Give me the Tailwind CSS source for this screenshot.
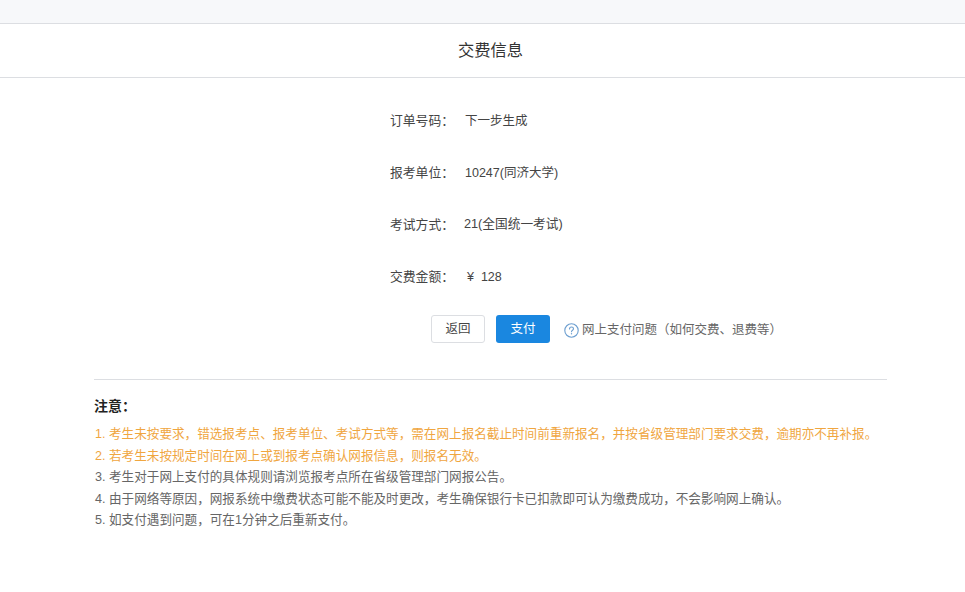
<!DOCTYPE html>
<html lang="zh-CN">
<head>
    <meta charset="UTF-8">
    <title>交费信息</title>
    <script src="https://cdn.jsdelivr.net/npm/@tailwindcss/browser@4"></script>
</head>
<body class="bg-white h-[592px] overflow-hidden font-['Liberation_Sans','Noto_Sans_CJK_SC',sans-serif] text-[12.5px] text-[#444]">
    <div class="h-6 bg-[#f7f8fa] border-b border-[#dcdee2]"></div>

    <header class="h-[54px] pl-[16px] flex items-center justify-center border-b border-[#dcdee2] text-[16.3px] text-[#333]">交费信息</header>

    <main>
        <!-- Order info -->
        <div class="pl-[390px] pt-[17px]">
            <div class="h-[52px] flex items-center">
                <span class="w-[75px] text-[12.8px]">订单号码：</span>
                <span>下一步生成</span>
            </div>
            <div class="h-[52px] flex items-center">
                <span class="w-[75px] text-[12.8px]">报考单位：</span>
                <span>10247(同济大学)</span>
            </div>
            <div class="h-[52px] flex items-center">
                <span class="w-[74px] text-[12.8px]">考试方式：</span>
                <span class="text-[12.7px]">21(全国统一考试)</span>
            </div>
            <div class="h-[52px] flex items-center">
                <span class="w-[77px] text-[12.8px]">交费金额：</span>
                <span>¥&nbsp; 128</span>
            </div>
        </div>

        <!-- Actions -->
        <div class="pl-[431px] mt-[12px] flex items-center">
            <button class="w-[54px] h-[28px] bg-white border border-[#dcdee2] rounded-[3px] text-[#444]">返回</button>
            <button class="w-[54px] h-[28px] ml-[11px] bg-[#1a87e0] rounded-[3px] text-white">支付</button>
            <svg class="ml-[14px] mt-[3px]" width="15" height="15" viewBox="0 0 15 15" fill="none">
                <circle cx="7.5" cy="7.5" r="6.7" stroke="#6d9fd0" stroke-width="1.1"/>
                <path d="M5.5 6c0-1.2.9-2 2-2s2 .8 2 1.8c0 1.4-2 1.5-2 3" stroke="#6d9fd0" stroke-width="1.1" stroke-linecap="round"/>
                <circle cx="7.5" cy="10.8" r=".7" fill="#6d9fd0"/>
            </svg>
            <span class="ml-[3px] mt-[3px] text-[#666]">网上支付问题（如何交费、退费等）</span>
        </div>

        <!-- Notes -->
        <div class="mx-[94px] mt-[36px] w-[793px] border-t border-[#dcdee2] pt-[16px]">
            <h2 class="text-sm font-bold text-[#222] mb-[8px]">注意：</h2>
            <ol class="pl-px leading-[21.5px] text-[12.6px] text-[#666]">
                <li class="text-[#f0a63f]">1. 考生未按要求，错选报考点、报考单位、考试方式等，需在网上报名截止时间前重新报名，并按省级管理部门要求交费，逾期亦不再补报。</li>
                <li class="text-[#f0a63f]">2. 若考生未按规定时间在网上或到报考点确认网报信息，则报名无效。</li>
                <li>3. 考生对于网上支付的具体规则请浏览报考点所在省级管理部门网报公告。</li>
                <li>4. 由于网络等原因，网报系统中缴费状态可能不能及时更改，考生确保银行卡已扣款即可认为缴费成功，不会影响网上确认。</li>
                <li>5. 如支付遇到问题，可在1分钟之后重新支付。</li>
            </ol>
        </div>
    </main>
</body>
</html>
